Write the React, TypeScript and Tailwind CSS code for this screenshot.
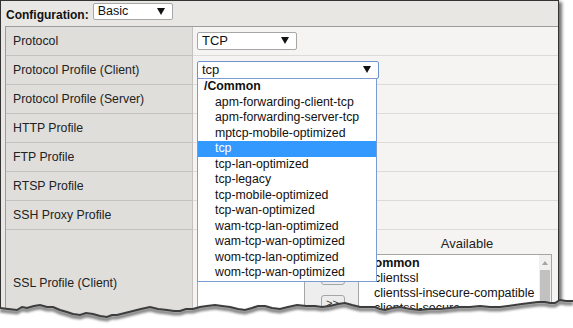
const rows = [
  "Protocol",
  "Protocol Profile (Client)",
  "Protocol Profile (Server)",
  "HTTP Profile",
  "FTP Profile",
  "RTSP Profile",
  "SSH Proxy Profile",
];

const options = [
  "apm-forwarding-client-tcp",
  "apm-forwarding-server-tcp",
  "mptcp-mobile-optimized",
  "tcp",
  "tcp-lan-optimized",
  "tcp-legacy",
  "tcp-mobile-optimized",
  "tcp-wan-optimized",
  "wam-tcp-lan-optimized",
  "wam-tcp-wan-optimized",
  "wom-tcp-lan-optimized",
  "wom-tcp-wan-optimized",
];

// jagged bottom edge of the cropped screenshot
const tear: [number, number][] = [
  [0, 308], [8, 309], [17, 310], [22, 307], [27, 308], [34, 306], [40, 305], [47, 307], [53, 307],
  [60, 310], [67, 312], [73, 314], [80, 315], [86, 313], [93, 314], [100, 316], [107, 317], [112, 315],
  [117, 315], [125, 313], [133, 311], [141, 309], [150, 307], [158, 309], [167, 310], [174, 311],
  [180, 311], [186, 309], [193, 309], [200, 307], [207, 306], [215, 305], [222, 306], [230, 307],
  [238, 309], [245, 310], [252, 308], [258, 306], [265, 306], [272, 308], [280, 309], [288, 307],
  [297, 305], [306, 306], [315, 306], [322, 307], [330, 306], [338, 304], [345, 303], [352, 305],
  [360, 307], [368, 307], [375, 307], [380, 309], [385, 310], [392, 308], [400, 307], [410, 309],
  [420, 310], [430, 309], [440, 309], [450, 308], [460, 307], [470, 307], [480, 306], [490, 307],
  [500, 307], [508, 306], [515, 305], [522, 304], [530, 303], [538, 302], [545, 302], [550, 303],
  [555, 303], [560, 300], [566, 301], [573, 301],
];

function Arrow() {
  return (
    <svg width="8" height="7" viewBox="0 0 8 7">
      <polygon points="0,0 8,0 4,7" fill="#111" />
    </svg>
  );
}

function SelectBox({ value, width, focused }: { value: string; width: string; focused?: boolean }) {
  return (
    <div
      className={`${width} h-[18px] bg-white flex items-center justify-between pl-[4px] pr-[7px] rounded-[2px] border ${
        focused ? "border-[#6d93cf]" : "border-[#a7a7a7]"
      }`}
    >
      <span className="text-[13px] leading-none text-[#111]">{value}</span>
      <Arrow />
    </div>
  );
}

export default function App() {
  const path = tear.map(([x, y], i) => `${i ? "L" : "M"}${x} ${y}`).join(" ");
  return (
    <div className="relative w-[573px] h-[328px] bg-white overflow-hidden font-['Liberation_Sans',Arial,sans-serif] text-[12px] text-[#222]">
      <div className="w-[559px] h-[328px] bg-[#e8e7e3] border-t border-l border-r border-[#333] shadow-[3px_2px_3px_rgba(0,0,0,0.55)]">
        {/* header */}
        <div className="h-[25px] flex items-center pl-[5px] gap-[4px]">
          <span className="font-bold text-[12px] text-[#111] pt-[3px]">Configuration:</span>
          <div className="w-[80px] h-[17px] bg-white border border-[#a7a7a7] rounded-[2px] flex items-center justify-between pl-[4px] pr-[7px] mb-[4px]">
            <span className="text-[12.5px] leading-none text-[#111]">Basic</span>
            <Arrow />
          </div>
        </div>

        {/* table */}
        <div className="ml-[4px] border-t border-l border-[#9c9c9c] grid grid-cols-[187px_1fr]">
          {rows.map((r, i) => (
            <div key={r} className="contents">
              <div className="h-[29px] bg-[#dfdedb] border-b border-r border-[#c3c2bf] flex items-center pl-[7px] text-[12.3px]">
                {r}
              </div>
              <div className="h-[29px] bg-[#f5f4f2] border-b border-[#dcdbd8] flex items-center pl-[4px] pb-[1px]">
                {i === 0 && <SelectBox value="TCP" width="w-[100px]" />}
                {i === 1 && <SelectBox value="tcp" width="w-[182px]" focused />}
              </div>
            </div>
          ))}
          <div className="h-[106px] bg-[#dfdedb] border-r border-[#c3c2bf] flex items-center pl-[7px] pt-[1px] text-[12.3px]">
            SSL Profile (Client)
          </div>
          <div className="h-[106px] bg-[#f5f4f2] flex pl-[4px] pt-[7px]">
            <div className="w-[108px] flex flex-col">
              <div className="h-[17px]" />
              <div className="flex-1 bg-white border border-[#a5a5a5]" />
            </div>
            <div className="w-[53px] flex flex-col items-center pl-[2px] pt-[31px] gap-[10px] bg-[#eeeeee]">
              <div className="w-[24px] h-[17px] bg-[#ececec] border border-[#a5a5a5] rounded-[3px]" />
              <div className="w-[24px] h-[17px] bg-[#ececec] border border-[#a5a5a5] rounded-[3px] text-[11px] leading-none flex items-center justify-center">
                &gt;&gt;
              </div>
            </div>
            <div className="w-[194px] flex flex-col">
              <div className="h-[17px] pl-[24px] text-center text-[13px] leading-[14px]">Available</div>
              <div className="flex-1 bg-white border border-[#a5a5a5] flex overflow-hidden">
                <div className="flex-1 min-w-0 pt-[1px] pl-[3px] text-[12.5px] leading-[15px] text-[#111] whitespace-nowrap overflow-hidden">
                  <div className="font-bold">/Common</div>
                  <div className="pl-[12px]">clientssl</div>
                  <div className="pl-[12px]">clientssl-insecure-compatible</div>
                  <div className="pl-[12px]">clientssl-secure</div>
                </div>
                <div className="w-[12px] shrink-0 bg-[#f0f0f0] flex flex-col items-center">
                  <svg width="8" height="14" viewBox="0 0 8 14" className="mt-[1px]">
                    <polygon points="1,9 7,9 4,5" fill="#a3a3a3" />
                  </svg>
                  <div className="w-[10px] flex-1 bg-[#c1c1c1]" />
                </div>
              </div>
            </div>
          </div>
        </div>
      </div>

      {/* open dropdown list */}
      <div className="absolute left-[197px] top-[78px] w-[180px] h-[204px] bg-white border border-[#7a9cd3] text-[12.3px] leading-[15.5px] text-[#111]">
        <div className="font-bold pl-[6px] h-[15.5px]">/Common</div>
        {options.map((o) => (
          <div
            key={o}
            className={`h-[15.5px] pl-[17px] ${o === "tcp" ? "bg-[#3399ff] text-white" : ""}`}
          >
            {o}
          </div>
        ))}
      </div>

      {/* torn edge */}
      <svg className="absolute left-0 top-0" width="573" height="328" viewBox="0 0 573 328">
        <defs>
          <filter id="b" x="-5%" y="-50%" width="110%" height="200%">
            <feGaussianBlur stdDeviation="1.2" />
          </filter>
        </defs>
        <path d={`${path} L573 328 L0 328 Z`} fill="#fff" />
        <path d={path} transform="translate(0 2.5)" fill="none" stroke="#8a8a8a" strokeWidth="4" filter="url(#b)" />
        <path d={path} fill="none" stroke="#3d3d3d" strokeWidth="2" />
      </svg>
    </div>
  );
}
